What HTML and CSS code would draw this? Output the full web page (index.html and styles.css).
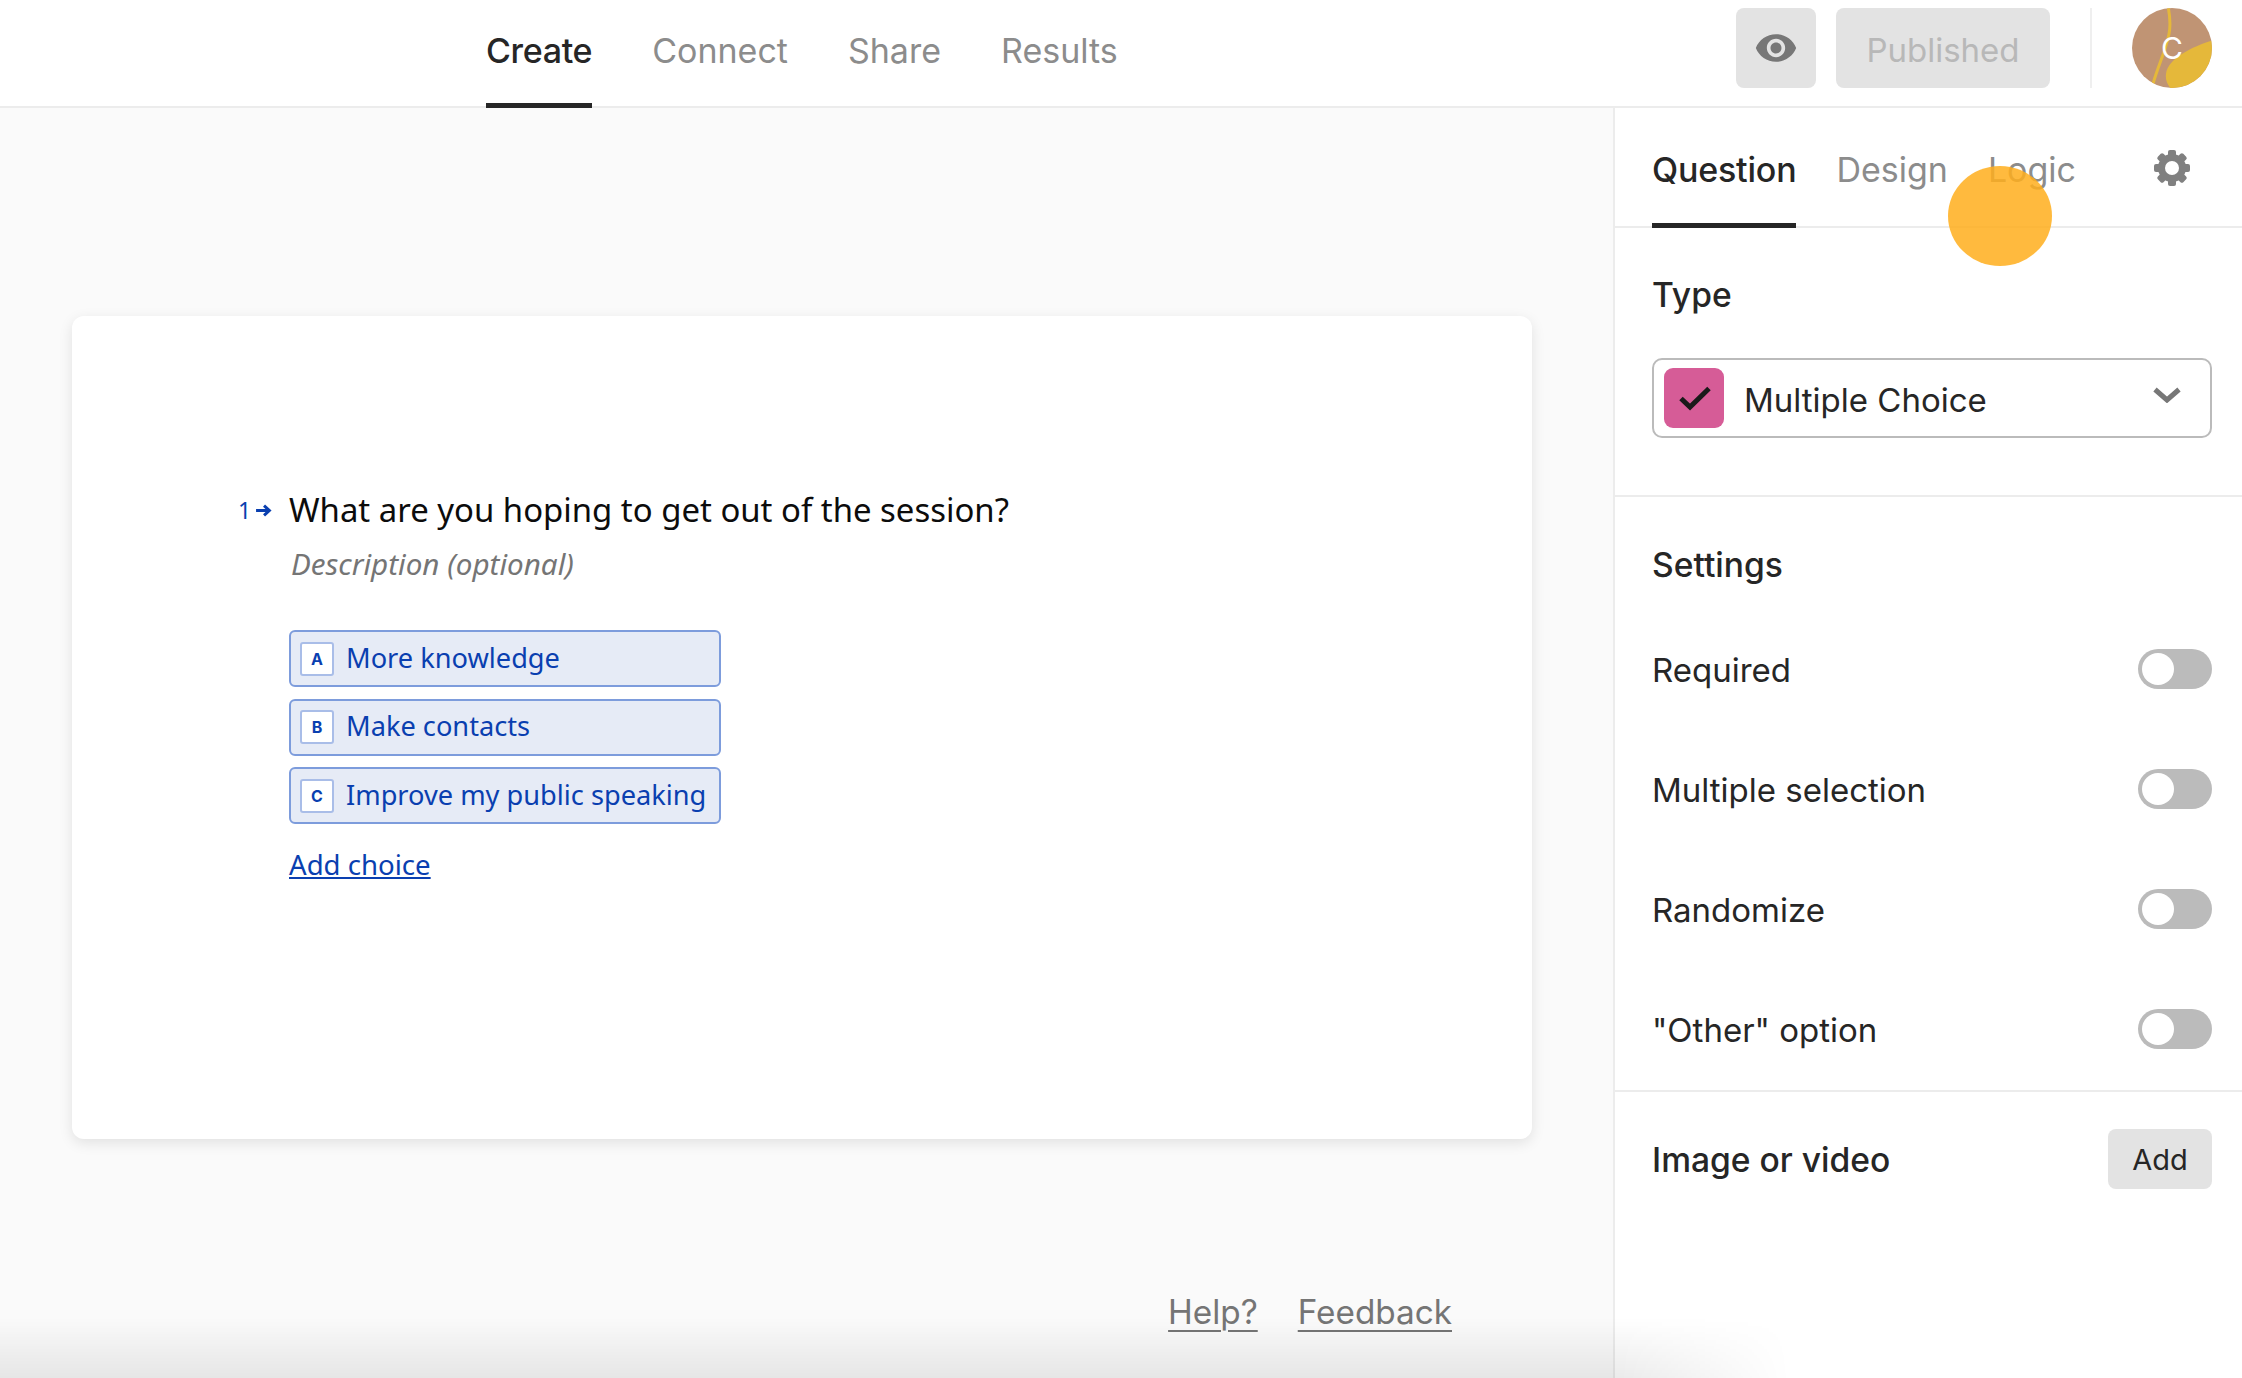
FILE: index.html
```html
<!DOCTYPE html>
<html lang="en">
<head>
<meta charset="utf-8">
<title>Create</title>
<link rel="stylesheet" href="styles.css">
</head>
<body>
<header class="topbar">
  <nav class="nav">
    <a class="nav-tab is-active">Create</a>
    <a class="nav-tab">Connect</a>
    <a class="nav-tab">Share</a>
    <a class="nav-tab">Results</a>
  </nav>
  <div class="actions">
    <button class="btn-eye" aria-label="Preview">
      <svg class="icon-eye" viewBox="0 0 24 24"><path fill-rule="evenodd" d="M12 4.5C7 4.5 2.73 7.61 1 12c1.73 4.39 6 7.5 11 7.5s9.27-3.11 11-7.5c-1.73-4.39-6-7.5-11-7.5zM12 17c-2.76 0-5-2.24-5-5s2.24-5 5-5 5 2.24 5 5-2.24 5-5 5zm0-8c-1.66 0-3 1.34-3 3s1.34 3 3 3 3-1.34 3-3-1.34-3-3-3z"/></svg>
    </button>
    <button class="btn-published">Published</button>
    <span class="divider"></span>
    <div class="avatar">
      <svg class="avatar-art" viewBox="0 0 80 80">
        <defs><clipPath id="av"><circle cx="40" cy="40" r="40"/></clipPath></defs>
        <g clip-path="url(#av)">
          <rect width="80" height="80" fill="#c09474"/>
          <path d="M36 -2 C38 8 39 16 37 26 C34 42 26 58 21 76" fill="none" stroke="#e5b83a" stroke-width="3"/>
          <path d="M82 32 C62 38 36 50 34 66 C33 72 36 78 40 82 L82 82 Z" fill="#e5b83a"/>
        </g>
      </svg>
      <span class="avatar-letter">C</span>
    </div>
  </div>
</header>

<div class="layout">
  <main class="canvas">
    <section class="card">
      <div class="question">
        <span class="q-num">1<svg class="q-arrow" viewBox="0 0 16 12"><path d="M1 6h12M8.5 1.5 13.5 6l-5 4.5" fill="none" stroke="currentColor" stroke-width="2.8"/></svg></span>
        <h1 class="q-title">What are you hoping to get out of the session?</h1>
      </div>
      <div class="q-body">
        <p class="q-desc">Description (optional)</p>
        <ul class="choices">
          <li class="choice"><span class="key">A</span><span class="choice-text">More knowledge</span></li>
          <li class="choice"><span class="key">B</span><span class="choice-text">Make contacts</span></li>
          <li class="choice"><span class="key">C</span><span class="choice-text">Improve my public speaking</span></li>
        </ul>
        <a class="add-choice">Add choice</a>
      </div>
    </section>
    <footer class="foot">
      <a class="foot-link">Help?</a>
      <a class="foot-link">Feedback</a>
    </footer>
  </main>

  <aside class="panel">
    <div class="panel-tabs">
      <a class="panel-tab is-active">Question</a>
      <a class="panel-tab">Design</a>
      <a class="panel-tab">Logic</a>
      <svg class="icon-gear" viewBox="0 0 36 36" aria-hidden="true">
        <g fill="#808080">
          <circle cx="18" cy="18" r="14"/>
          <rect x="14" y="0" width="8" height="36" rx="2"/>
          <rect x="14" y="0" width="8" height="36" rx="2" transform="rotate(45 18 18)"/>
          <rect x="14" y="0" width="8" height="36" rx="2" transform="rotate(90 18 18)"/>
          <rect x="14" y="0" width="8" height="36" rx="2" transform="rotate(135 18 18)"/>
        </g>
        <circle cx="18" cy="18" r="7" fill="#fff"/>
      </svg>
    </div>

    <section class="type-section">
      <h2 class="panel-h">Type</h2>
      <div class="select">
        <span class="type-badge">
          <svg class="icon-check" viewBox="0 0 60 60"><path d="M17 30.5 26 39 45 20.5" fill="none" stroke="#1a1a1a" stroke-width="5"/></svg>
        </span>
        <span class="select-text">Multiple Choice</span>
        <svg class="icon-chevron" viewBox="0 0 28 16"><path d="M2 2.5 14 13 26 2.5" fill="none" stroke="#777" stroke-width="5"/></svg>
      </div>
    </section>

    <section class="settings">
      <h2 class="panel-h settings-h">Settings</h2>
      <div class="row"><span>Required</span><span class="toggle"></span></div>
      <div class="row"><span>Multiple selection</span><span class="toggle"></span></div>
      <div class="row"><span>Randomize</span><span class="toggle"></span></div>
      <div class="row"><span>"Other" option</span><span class="toggle"></span></div>
    </section>

    <section class="media">
      <h2 class="panel-h">Image or video</h2>
      <button class="btn-add">Add</button>
    </section>
  </aside>
</div>

<div class="cursor-dot"></div>
<div class="bottom-fade"></div>
</body>
</html>
```

FILE: styles.css
```css
* { box-sizing: border-box; }
html, body { margin: 0; height: 100%; }
body {
  position: relative;
  width: 2242px;
  height: 1378px;
  overflow: hidden;
  background: #fafafa;
  color: #262626;
  font-family: Inter, "Liberation Sans", sans-serif;
}
a { cursor: pointer; }
h1, h2, p, ul { margin: 0; padding: 0; }
button { border: 0; font-family: inherit; }

.topbar {
  display: flex;
  align-items: center;
  height: 108px;
  padding: 0 30px 12px 486px;
  background: #fff;
  box-shadow: inset 0 -2px 0 #ececec;
}
.nav { display: flex; gap: 60px; align-self: stretch; margin-bottom: -12px; }
.nav-tab {
  display: flex;
  align-items: center;
  height: 108px;
  padding-bottom: 3px;
  font-size: 34px;
  color: #8c8c8c;
  border-bottom: 5px solid transparent;
}
.nav-tab.is-active { color: #262626; font-weight: 500; letter-spacing: -0.35px; border-bottom-color: #262626; }

.actions { display: flex; align-items: center; margin-left: auto; }
.btn-eye {
  display: flex; align-items: center; justify-content: center;
  width: 80px; height: 80px; padding: 0;
  background: #e3e3e3; border-radius: 8px;
}
.icon-eye { width: 44px; height: 44px; fill: #777; }
.btn-published {
  width: 214px; height: 80px; margin-left: 20px; padding: 3px 0 0;
  background: #e3e3e3; border-radius: 8px;
  font-size: 33px; color: #b8b8b8;
}
.divider { width: 2px; height: 80px; margin: 0 40px 0 40px; background: #efefef; }
.avatar { position: relative; width: 80px; height: 80px; }
.avatar-art { display: block; width: 80px; height: 80px; }
.avatar-letter {
  position: absolute; inset: 0;
  display: flex; align-items: center; justify-content: center;
  font-size: 30px; color: #fff;
}

.layout { display: flex; height: 1270px; }
.canvas { flex: 1; padding: 208px 81px 0 72px; background: #fafafa; }
.card {
  height: 823px;
  padding: 170px 0 0 166px;
  background: #fff;
  border-radius: 12px;
  box-shadow: 0 4px 14px rgba(0,0,0,.1);
  font-family: "Noto Sans", sans-serif;
}
.question { display: flex; align-items: center; }
.q-num {
  display: flex; align-items: center;
  width: 51px; font-size: 23px; color: #0a3fb0;
}
.q-arrow { width: 17px; height: 13px; margin-left: 4px; }
.q-title { font-size: 32.9px; font-weight: 400; color: #0c0c0c; line-height: 48px; }
.q-body { margin-left: 51px; }
.q-desc { margin-top: 7px; margin-left: 2px; font-size: 29.6px; font-style: italic; color: #757575; line-height: 46px; }
.choices { margin-top: 43px; list-style: none; }
.choice {
  display: flex; align-items: center;
  width: 432px; height: 57px; margin-bottom: 11.6px; padding-left: 9px;
  background: #e6ebf6;
  border: 2px solid #7d9cdc;
  border-radius: 6px;
  font-size: 27.2px; color: #0a3fb0;
}
.choice-text { padding-bottom: 3px; }
.key {
  display: flex; align-items: center; justify-content: center;
  width: 34px; height: 34px; margin-right: 12px;
  background: #fff; border: 2px solid #a9bde8; border-radius: 3px;
  font-family: Inter, sans-serif; font-size: 16px; font-weight: 700;
}
.add-choice {
  display: inline-block; margin-top: 5px;
  font-size: 27.6px; line-height: 46px; color: #0a3fb0; text-decoration: underline;
}
.foot { display: flex; justify-content: flex-end; gap: 40px; padding: 153px 0 0; margin-right: 80px; font-size: 33.3px; }
.foot-link { color: #757575; text-decoration: underline; text-underline-offset: 6px; text-decoration-thickness: 2px; }

.panel { width: 629px; background: #fff; border-left: 2px solid #ececec; }
.panel-tabs {
  display: flex; align-items: stretch; gap: 40px;
  height: 120px; padding-left: 37px; padding-right: 52px;
  box-shadow: inset 0 -2px 0 #ececec;
}
.panel-tab {
  display: flex; align-items: center;
  padding-top: 8px;
  font-size: 34px; color: #8c8c8c;
  border-bottom: 5px solid transparent;
}
.panel-tab.is-active { color: #262626; font-weight: 500; letter-spacing: -0.2px; border-bottom-color: #262626; }
.icon-gear { width: 36px; height: 36px; margin-left: auto; margin-top: 42px; }

.panel-h { font-size: 33.6px; font-weight: 500; color: #262626; }
.type-section { height: 269px; padding: 46px 30px 0 37px; border-bottom: 2px solid #ececec; }
.select {
  display: flex; align-items: center;
  height: 80px; margin-top: 43px; padding: 0 29px 0 10px;
  border: 2px solid #bbb; border-radius: 10px;
}
.type-badge { width: 60px; height: 60px; background: #d65c97; border-radius: 9px; }
.icon-check { display: block; width: 60px; height: 60px; }
.select-text { margin-left: 20px; padding-top: 3px; font-size: 33px; color: #262626; }
.icon-chevron { width: 28px; height: 16px; margin-left: auto; margin-bottom: 6px; }

.settings { height: 595px; padding: 47px 30px 0 37px; border-bottom: 2px solid #ececec; }
.settings-h { margin-bottom: 25px; }
.row {
  display: flex; align-items: center; justify-content: space-between;
  height: 120px;
  font-size: 33px; color: #262626;
}
.toggle {
  position: relative;
  width: 74px; height: 40px;
  margin-bottom: 2px;
  background: #bbb; border-radius: 20px;
}
.toggle::before {
  content: ""; position: absolute; left: 4px; top: 4px;
  width: 32px; height: 32px; border-radius: 50%; background: #fff;
}
.media {
  display: flex; align-items: center; justify-content: space-between;
  padding: 37px 30px 0 37px;
}
.btn-add {
  width: 104px; height: 60px; padding: 0;
  background: #e3e3e3; border-radius: 8px;
  font-size: 29px; color: #262626;
}

.cursor-dot {
  position: absolute; left: 1948px; top: 166px;
  width: 104px; height: 100px; border-radius: 50%;
  background: rgba(255,174,28,.85);
}
.bottom-fade {
  position: absolute; left: 0; bottom: 0;
  width: 1800px; height: 60px;
  background: linear-gradient(to bottom, rgba(0,0,0,0), rgba(0,0,0,.08));
  -webkit-mask-image: linear-gradient(to right, #000 1620px, transparent 1790px);
  mask-image: linear-gradient(to right, #000 1620px, transparent 1790px);
}
```
